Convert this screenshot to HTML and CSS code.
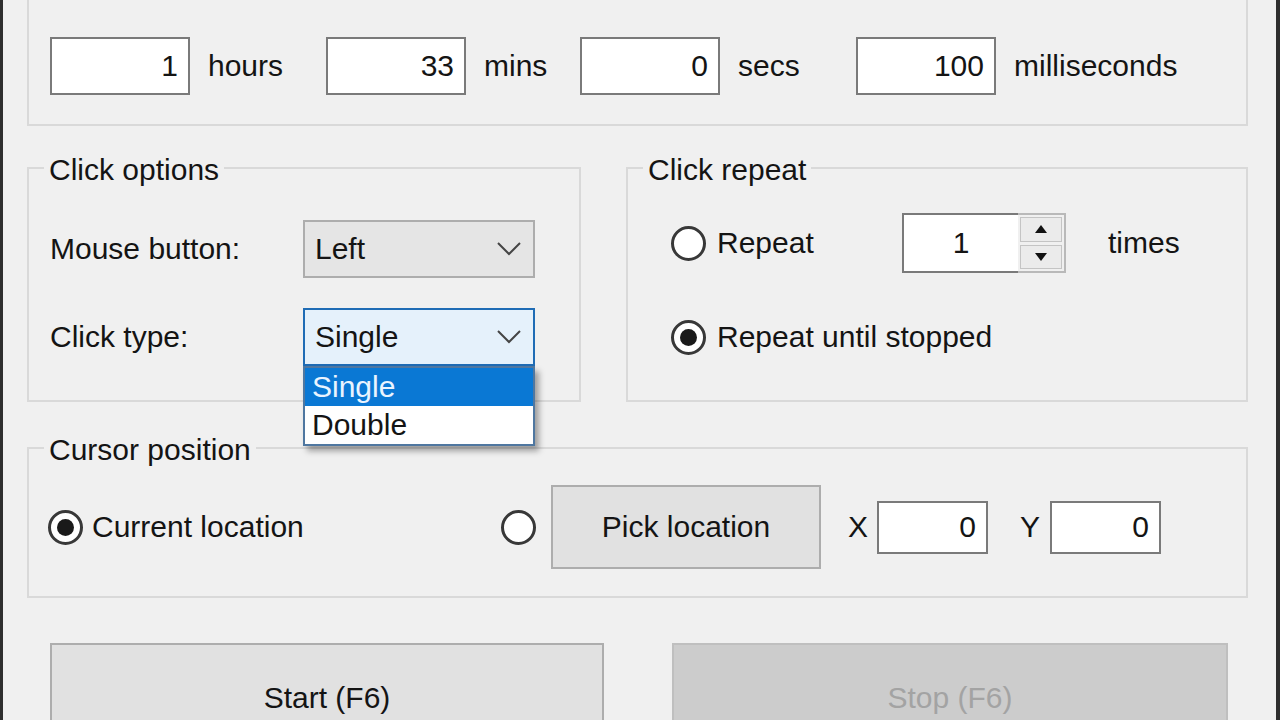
FILE: index.html
```html
<!DOCTYPE html>
<html>
<head>
	<title>Auto Clicker</title>
	<link rel="stylesheet" href="styles.css">
</head>
<body>
<div class="window">

	<div class="group-top">
		<div class="field"><input class="textbox" value="1"><span class="unit">hours</span></div>
		<div class="field"><input class="textbox" value="33"><span class="unit">mins</span></div>
		<div class="field"><input class="textbox" value="0"><span class="unit">secs</span></div>
		<div class="field"><input class="textbox" value="100"><span class="unit">milliseconds</span></div>
	</div>

	<div class="row">
		<fieldset class="group click-options">
			<legend>Click options</legend>
			<div class="options-grid">
				<span>Mouse button:</span>
				<div class="combo">
					<span>Left</span>
					<svg width="24" height="14" viewBox="0 0 24 14"><polyline points="1,1 12,12 23,1" fill="none" stroke="#454545" stroke-width="2"/></svg>
				</div>
				<span>Click type:</span>
				<div class="combo-wrap">
					<div class="combo focused">
						<span>Single</span>
						<svg width="24" height="14" viewBox="0 0 24 14"><polyline points="1,1 12,12 23,1" fill="none" stroke="#454545" stroke-width="2"/></svg>
					</div>
					<div class="dropdown">
						<div class="item selected">Single</div>
						<div class="item">Double</div>
					</div>
				</div>
			</div>
		</fieldset>

		<fieldset class="group click-repeat">
			<legend>Click repeat</legend>
			<div class="repeat-rows">
				<div class="repeat-row">
					<label class="radio-label first"><span class="radio"></span>Repeat</label>
					<div class="numeric">
						<div class="numeric-text">1</div>
						<div class="spin">
							<div class="spin-btn"><svg width="12" height="8" viewBox="0 0 12 8"><path d="M0 8 L6 0 L12 8 Z" fill="#111"/></svg></div>
							<div class="spin-btn"><svg width="12" height="8" viewBox="0 0 12 8"><path d="M0 0 L6 8 L12 0 Z" fill="#111"/></svg></div>
						</div>
					</div>
					<span class="times">times</span>
				</div>
				<div class="repeat-row">
					<label class="radio-label"><span class="radio checked"></span>Repeat until stopped</label>
				</div>
			</div>
		</fieldset>
	</div>

	<fieldset class="group cursor">
		<legend>Cursor position</legend>
		<div class="cursor-row">
			<label class="radio-label current"><span class="radio checked"></span>Current location</label>
			<span class="radio"></span>
			<button class="pick">Pick location</button>
			<span class="axis x">X</span>
			<input class="textbox coord" value="0">
			<span class="axis y">Y</span>
			<input class="textbox coord" value="0">
		</div>
	</fieldset>

	<div class="actions">
		<button class="start">Start (F6)</button>
		<button class="stop" disabled>Stop (F6)</button>
	</div>

</div>
</body>
</html>
```

FILE: styles.css
```css
body {
	background-color: #f0f0f0;
	color: #141414;
	font-family: "Liberation Sans", Arial, sans-serif;
	font-size: 30px;
	margin: 0;
	overflow: hidden;
}
.window {
	border-left: 3px solid #2e2e2e;
	border-right: 4px solid #2e2e2e;
	box-sizing: border-box;
	height: 720px;
	overflow: hidden;
	width: 1280px;
}
.textbox {
	background-color: #fff;
	border: 2px solid #7a7a7a;
	box-sizing: border-box;
	color: inherit;
	font: inherit;
	height: 58px;
	margin: 0;
	padding: 0 10px;
	text-align: right;
	width: 140px;
}
.group-top {
	border: 2px solid #d9d9d9;
	border-top: 0;
	display: grid;
	grid-template-columns: 276px 254px 276px auto;
	margin: 0 28px 0 24px;
	padding: 37px 0 29px 21px;
}
.field {
	align-items: center;
	display: flex;
}
.unit {
	margin-left: 18px;
}
.row {
	display: flex;
	gap: 45px;
	margin: 24px 0 0 24px;
}
.group {
	border: 2px solid #d9d9d9;
	box-sizing: border-box;
	margin: 0;
	min-width: 0;
	padding: 0 0 0 21px;
}
.group legend {
	line-height: 32px;
	margin-left: -6px;
	padding: 4px 5px 0;
}
.click-options {
	padding-bottom: 34px;
	padding-top: 34px;
	width: 554px;
}
.options-grid {
	align-items: center;
	display: grid;
	grid-template-columns: 253px 232px;
	row-gap: 30px;
}
.combo-wrap {
	position: relative;
	z-index: 2;
}
.combo {
	align-items: center;
	background-color: #e5e5e5;
	border: 2px solid #adadad;
	box-sizing: border-box;
	display: flex;
	height: 58px;
	justify-content: space-between;
	padding: 0 12px 0 10px;
}
.combo.focused {
	background-color: #e5f1fb;
	border-color: #1f6cb5;
}
.dropdown {
	background-color: #fff;
	border: 2px solid #4f77a0;
	box-shadow: 4px 5px 6px rgba(0, 0, 0, 0.35);
	box-sizing: border-box;
	left: 0;
	position: absolute;
	top: 100%;
	width: 100%;
}
.item {
	height: 38px;
	line-height: 38px;
	padding-left: 7px;
}
.item.selected {
	background-color: #0a78d4;
	color: #eaf4ff;
}
.click-repeat {
	padding-bottom: 33px;
	padding-top: 27px;
	width: 622px;
}
.repeat-rows {
	display: flex;
	flex-direction: column;
	gap: 34px;
	margin-left: 22px;
}
.repeat-row {
	align-items: center;
	display: flex;
	height: 60px;
}
.radio-label {
	align-items: center;
	display: flex;
	gap: 11px;
}
.radio-label.first {
	width: 231px;
}
.radio {
	align-items: center;
	background-color: #fff;
	border: 3px solid #383838;
	border-radius: 50%;
	box-sizing: border-box;
	display: flex;
	flex: none;
	height: 35px;
	justify-content: center;
	width: 35px;
}
.radio.checked::after {
	background-color: #1a1a1a;
	border-radius: 50%;
	content: "";
	height: 17px;
	width: 17px;
}
.numeric {
	display: flex;
	height: 60px;
	width: 164px;
}
.numeric-text {
	align-items: center;
	background-color: #fff;
	border: 2px solid #7a7a7a;
	border-right: 0;
	box-sizing: border-box;
	display: flex;
	justify-content: center;
	width: 116px;
}
.spin {
	border: 2px solid #b9b9b9;
	border-left: 0;
	box-sizing: border-box;
	display: flex;
	flex-direction: column;
	gap: 3px;
	padding: 2px;
	width: 48px;
}
.spin-btn {
	align-items: center;
	background-color: #ebebeb;
	border: 1px solid #c4c4c4;
	display: flex;
	flex: 1;
	justify-content: center;
}
.times {
	margin-left: 42px;
}
.cursor {
	margin: 28px 28px 0 24px;
	padding-bottom: 27px;
	padding-top: 19px;
}
.cursor-row {
	align-items: center;
	display: flex;
	height: 84px;
}
.radio-label.current {
	gap: 9px;
	margin-left: -2px;
	width: 453px;
}
button {
	background-color: #e1e1e1;
	border: 2px solid #adadad;
	box-sizing: border-box;
	color: inherit;
	font: inherit;
	margin: 0;
	padding: 0;
}
.pick {
	height: 84px;
	margin-left: 15px;
	width: 270px;
}
.axis.x {
	margin: 0 9px 0 27px;
}
.axis.y {
	margin: 0 10px 0 32px;
}
.coord {
	height: 53px;
	width: 111px;
}
.actions {
	display: flex;
	gap: 68px;
	margin: 45px 0 0 47px;
}
.actions button {
	height: 110px;
	width: 554px;
}
.actions .stop {
	background-color: #cccccc;
	border-color: #bfbfbf;
	color: #a3a3a3;
	width: 556px;
}
```
